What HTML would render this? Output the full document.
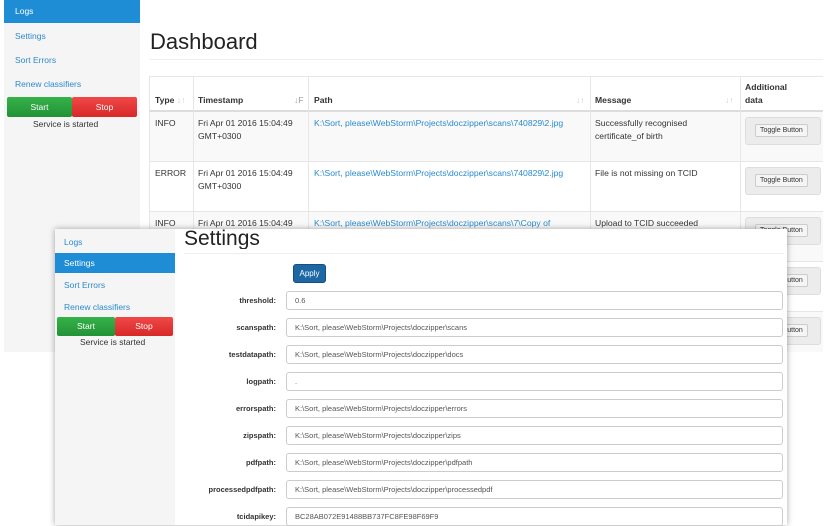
<!DOCTYPE html>
<html><head><style>
*{box-sizing:border-box;margin:0;padding:0}
body{width:825px;height:525px;overflow:hidden;background:#fff;font-family:"Liberation Sans",Arial,sans-serif;position:relative;font-size:8.5px;color:#333}
.a{position:absolute}
.side{background:#f5f5f5}
.nav{position:absolute;color:#2a8ad0;font-size:8.5px}
.act{background:#1f8dd6;color:#fff}
.btn-s{position:absolute;background:linear-gradient(#36b24a,#229236);color:#fff;text-align:center;border-radius:2px}
.btn-x{position:absolute;background:linear-gradient(#f04848,#d82828);color:#fff;text-align:center;border-radius:2px}
.cell{position:absolute;font-size:8.6px;line-height:13px}
.b{font-weight:bold;color:#333}
.lnk{color:#2a8ad0}
.vl{position:absolute;width:1px;background:#e6e6e6}
.hl{position:absolute;height:1px;background:#e6e6e6}
.tog{position:absolute;background:#ececec;border:1px solid #ddd;border-radius:3px;width:76px;height:28px}
.tog span{position:absolute;left:9px;top:6px;background:#f5f5f5;border:1px solid #ccc;border-radius:2px;font-size:7px;padding:2px 4px;color:#333}
.lbl{position:absolute;right:549px;font-weight:bold;font-size:7.5px;color:#333}
.inp{position:absolute;left:286px;width:497px;height:19px;border:1px solid #ccc;border-radius:3px;font-size:7.5px;color:#555;padding:4px 8px;background:#fff}
</style></head><body>
<div class="a side" style="left:4px;top:0;width:136px;height:352px"></div>
<div class="a act" style="left:4px;top:0;width:136px;height:23px"></div>
<div class="nav" style="left:15px;top:6px;color:#fff">Logs</div>
<div class="nav" style="left:15px;top:31px">Settings</div>
<div class="nav" style="left:15px;top:55px">Sort Errors</div>
<div class="nav" style="left:15px;top:79px">Renew classifiers</div>
<div class="btn-s" style="left:7px;top:97px;width:65px;height:20px;line-height:20px">Start</div>
<div class="btn-x" style="left:72px;top:97px;width:65px;height:20px;line-height:20px">Stop</div>
<div class="a" style="left:33px;top:119px;font-size:8.5px">Service is started</div>
<div class="a" style="left:150px;top:29px;font-size:22px;color:#222">Dashboard</div>
<div class="hl" style="left:149px;top:59px;width:674px;background:#eee"></div>
<div class="a" style="left:149px;top:76px;width:674px;height:276px;border-top:1px solid #e6e6e6;border-left:1px solid #e6e6e6"></div>
<div class="a" style="left:150px;top:112px;width:673px;height:49px;background:#f9f9f9"></div>
<div class="a" style="left:150px;top:212px;width:673px;height:49px;background:#f9f9f9"></div>
<div class="a" style="left:150px;top:312px;width:673px;height:40px;background:#f9f9f9"></div>
<div class="hl" style="left:149px;top:110px;width:674px;height:2px;background:#ddd"></div>
<div class="hl" style="left:149px;top:161px;width:674px"></div>
<div class="hl" style="left:149px;top:211px;width:674px"></div>
<div class="hl" style="left:149px;top:261px;width:674px"></div>
<div class="hl" style="left:149px;top:311px;width:674px"></div>
<div class="vl" style="left:193px;top:76px;height:276px"></div>
<div class="vl" style="left:308px;top:76px;height:276px"></div>
<div class="vl" style="left:590px;top:76px;height:276px"></div>
<div class="vl" style="left:740px;top:76px;height:276px"></div>
<div class="cell b" style="left:155px;top:94px">Type <span style="color:#ccc">↓↑</span></div>
<div class="cell b" style="left:198px;top:94px">Timestamp</div><div class="cell" style="left:294px;top:94px;color:#999">↓F</div>
<div class="cell b" style="left:314px;top:94px">Path</div><div class="cell" style="left:576px;top:94px;color:#ccc">↓↑</div>
<div class="cell b" style="left:595px;top:94px">Message</div><div class="cell" style="left:725px;top:94px;color:#ccc">↓↑</div>
<div class="cell b" style="left:745px;top:81px">Additional<br>data</div>
<div class="cell" style="left:155px;top:117px">INFO</div>
<div class="cell" style="left:198px;top:117px">Fri Apr 01 2016 15:04:49<br>GMT+0300</div>
<div class="cell lnk" style="left:314px;top:117px">K:\Sort, please\WebStorm\Projects\doczipper\scans\740829\2.jpg</div>
<div class="cell" style="left:595px;top:117px">Successfully recognised<br>certificate_of birth</div>
<div class="cell" style="left:155px;top:167px">ERROR</div>
<div class="cell" style="left:198px;top:167px">Fri Apr 01 2016 15:04:49<br>GMT+0300</div>
<div class="cell lnk" style="left:314px;top:167px">K:\Sort, please\WebStorm\Projects\doczipper\scans\740829\2.jpg</div>
<div class="cell" style="left:595px;top:167px">File is not missing on TCID</div>
<div class="cell" style="left:155px;top:217px">INFO</div>
<div class="cell" style="left:198px;top:217px">Fri Apr 01 2016 15:04:49</div>
<div class="cell lnk" style="left:314px;top:217px">K:\Sort, please\WebStorm\Projects\doczipper\scans\7\Copy of</div>
<div class="cell" style="left:595px;top:217px">Upload to TCID succeeded</div>
<div class="tog" style="left:745px;top:117px"><span>Toggle Button</span></div>
<div class="tog" style="left:745px;top:167px"><span>Toggle Button</span></div>
<div class="tog" style="left:745px;top:217px"><span>Toggle Button</span></div>
<div class="tog" style="left:745px;top:267px"><span>Toggle Button</span></div>
<div class="tog" style="left:745px;top:317px"><span>Toggle Button</span></div>
<div class="a" style="left:55px;top:229px;width:732px;height:296px;background:#fff;box-shadow:0 0 6px rgba(0,0,0,.35)"></div>
<div class="a side" style="left:55px;top:229px;width:120px;height:296px"></div>
<div class="a act" style="left:55px;top:253px;width:120px;height:20px"></div>
<div class="nav" style="left:64px;top:237px">Logs</div>
<div class="nav" style="left:64px;top:258px;color:#fff">Settings</div>
<div class="nav" style="left:64px;top:280px">Sort Errors</div>
<div class="nav" style="left:64px;top:302px">Renew classifiers</div>
<div class="btn-s" style="left:57px;top:317px;width:58px;height:19px;line-height:19px">Start</div>
<div class="btn-x" style="left:115px;top:317px;width:58px;height:19px;line-height:19px">Stop</div>
<div class="a" style="left:80px;top:337px;font-size:8.5px">Service is started</div>
<div class="a" style="left:184px;top:229px;font-size:21px;color:#222;overflow:hidden;height:20px;line-height:20px">Settings</div>
<div class="hl" style="left:184px;top:253px;width:600px;background:#eee"></div>
<div class="a" style="left:293px;top:264px;width:33px;height:19px;background:#1d67a5;border:1px solid #154f80;border-radius:3px;color:#fff;font-size:8px;text-align:center;line-height:17px">Apply</div>
<div class="lbl" style="top:296px">threshold:</div><div class="inp" style="top:291px">0.6</div>
<div class="lbl" style="top:323px">scanspath:</div><div class="inp" style="top:318px">K:\Sort, please\WebStorm\Projects\doczipper\scans</div>
<div class="lbl" style="top:350px">testdatapath:</div><div class="inp" style="top:345px">K:\Sort, please\WebStorm\Projects\doczipper\docs</div>
<div class="lbl" style="top:377px">logpath:</div><div class="inp" style="top:372px">.</div>
<div class="lbl" style="top:404px">errorspath:</div><div class="inp" style="top:399px">K:\Sort, please\WebStorm\Projects\doczipper\errors</div>
<div class="lbl" style="top:431px">zipspath:</div><div class="inp" style="top:426px">K:\Sort, please\WebStorm\Projects\doczipper\zips</div>
<div class="lbl" style="top:458px">pdfpath:</div><div class="inp" style="top:453px">K:\Sort, please\WebStorm\Projects\doczipper\pdfpath</div>
<div class="lbl" style="top:485px">processedpdfpath:</div><div class="inp" style="top:480px">K:\Sort, please\WebStorm\Projects\doczipper\processedpdf</div>
<div class="lbl" style="top:512px">tcidapikey:</div><div class="inp" style="top:507px">BC28AB072E91488BB737FC8FE98F69F9</div>
</body></html>
